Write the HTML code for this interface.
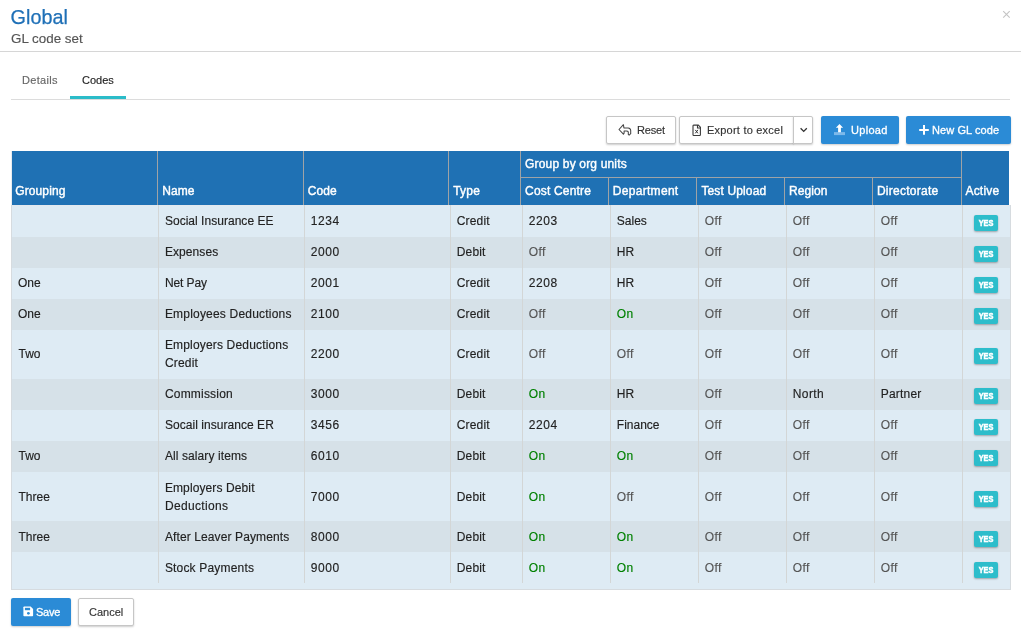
<!DOCTYPE html>
<html lang="en">
<head>
<meta charset="utf-8">
<title>Global - GL code set</title>
<style>
*{box-sizing:border-box;margin:0;padding:0}
html,body{width:1021px;height:635px;background:#fff;overflow:hidden}
body{position:relative;font-family:"Liberation Sans",sans-serif;color:#222;font-size:12px}
#wrap{position:absolute;left:0;top:0;width:1021px;height:635px;will-change:transform}
.abs{position:absolute;white-space:nowrap}
#title{left:10.6px;top:5px;font-size:19.8px;line-height:24px;color:#1f70b7;-webkit-text-stroke-width:.25px}
#sub{left:11px;top:30px;font-size:13.4px;line-height:18px;color:#555;-webkit-text-stroke-width:.15px}
#close{left:1001px;top:5px;font-size:15px;line-height:18px;color:#c4c4c4}
#hr1{left:0;top:51px;width:1021px;height:1px;background:#d6d6d6}
#tabline{left:11px;top:99px;width:999px;height:1px;background:#dcdcdc}
#tabactive{left:70px;top:96px;width:56px;height:3px;background:#2bbcc9}
.tab{top:71px;font-size:11px;line-height:18px;-webkit-text-stroke-width:.15px}
.btn{top:116px;height:28px;border-radius:2px;font-size:11px;line-height:26px;text-align:left}
.btn.w{background:#fff;border:1px solid #c6c6c6;color:#333;box-shadow:0 1px 2px rgba(0,0,0,.2);-webkit-text-stroke:.15px #333}
.btn.b{background:#2b8bd6;color:#fff;line-height:28px;box-shadow:0 1px 2px rgba(0,0,0,.2)}
.btn svg{position:absolute}
.btn span{position:absolute;top:0}
.sb{-webkit-text-stroke:.3px #fff}
/* table */
#thead{left:11px;top:151px;width:998px;height:54px;background:#1f71b4;box-shadow:inset 1px 0 0 #e9ecef}
#thead div{position:absolute;color:#fff;font-size:12px;line-height:14px;white-space:nowrap;-webkit-text-stroke:.4px #fff}
#thead i{position:absolute;background:#9fa3a6;display:block}
#tbody{left:11px;top:205px;width:1000px;height:385px;background:#deebf4;border:1px solid #d6dbdf;border-top:none}
.row{position:absolute;left:0;width:998px}
.row.o{background:#deebf4}
.row.e{background:#d6e1e8}
.row div{position:absolute;font-size:12px;line-height:18px;color:#222;white-space:nowrap;-webkit-text-stroke-width:.15px}
.row div.off{color:#555;letter-spacing:.4px}
.row div.on{color:#008000;letter-spacing:.35px;-webkit-text-stroke-width:.15px}
.row div.cd{letter-spacing:.15px}
.row div.num{letter-spacing:.55px}
.vl{position:absolute;top:0;width:1px;height:378px;background:#d3d6d6}
.yes{position:absolute;width:24px;height:16px;background:#2dbdcb;border-radius:2px;color:#fff;font-size:9.4px;line-height:16px;text-align:center;box-shadow:0 1px 2px rgba(0,0,0,.3)}
.yes b{display:inline-block;font-weight:bold;transform:translateX(-.4px) scaleX(.78);transform-origin:50% 50%;-webkit-text-stroke:.55px #fff}
</style>
</head>
<body>
<div id="wrap">
<div class="abs" id="title">Global</div>
<div class="abs" id="sub">GL code set</div>
<svg class="abs" style="left:1002px;top:10px" width="9" height="9" viewBox="0 0 9 9" role="img" aria-label="Close"><path d="M1.2,1.2 L7.7,7.7 M7.7,1.2 L1.2,7.7" stroke="#c4c4c4" stroke-width="1.1" fill="none"/></svg>
<div class="abs" id="hr1"></div>
<div class="abs tab" style="left:22px;color:#666;letter-spacing:.3px">Details</div>
<div class="abs tab" style="left:82px;color:#222">Codes</div>
<div class="abs" id="tabline"></div>
<div class="abs" id="tabactive"></div>

<div class="abs btn w" style="left:606px;width:70px"><span style="left:30px;letter-spacing:-.15px">Reset</span></div>
<div class="abs btn w" style="left:679px;width:115px;border-radius:2px 0 0 2px"><span style="left:27px;letter-spacing:.22px">Export to excel</span></div>
<div class="abs btn w" style="left:793px;width:20px;border-radius:0 2px 2px 0"></div>
<div class="abs btn b" style="left:821px;width:78px"><span class="sb" style="left:30px;letter-spacing:.3px">Upload</span></div>
<div class="abs btn b" style="left:906px;width:105px"><span class="sb" style="left:26px;letter-spacing:.08px">New GL code</span></div>
<svg class="abs" style="left:618px;top:123.5px" width="14" height="12" viewBox="0 0 14 12"><path d="M1,5.5 L5.4,0.7 L5.9,3.9 L10.2,3.9 Q12.7,4.2 12.7,6.5 L12.7,9.7 L11.1,11.1 L10.3,10.4 L10.3,8 Q10,7 8.3,7 L6.1,7 L6.1,9.1 L5.4,10.2 Z" fill="none" stroke="#444" stroke-width="1.05" stroke-linejoin="round"/></svg>
<svg class="abs" style="left:692px;top:123.5px" width="10" height="13" viewBox="0 0 10 13"><path d="M1.7,1.1 H6.3 L8.4,3.2 V10.8 Q8.4,11.5 7.7,11.5 H1.7 Q1,11.5 1,10.8 V1.8 Q1,1.1 1.7,1.1 Z" fill="none" stroke="#3a3a3a" stroke-width="1.1"/><path d="M5.5,1.1 V4 H8.4" fill="none" stroke="#3a3a3a" stroke-width="1.1"/><path d="M3.3,5.9 L5.9,9.3 M5.9,5.9 L3.3,9.3" fill="none" stroke="#333" stroke-width="1"/></svg>
<svg class="abs" style="left:799px;top:126px" width="10" height="8" viewBox="0 0 10 8"><path d="M1.6,2.2 L4.7,5.4 L7.8,2.2" fill="none" stroke="#333" stroke-width="1.3"/></svg>
<svg class="abs" style="left:833px;top:123px" width="14" height="13" viewBox="0 0 14 13"><rect x="1" y="9.1" width="11" height="3" fill="#7db9ea"/><path d="M6.5,0.9 L10.1,4.7 H7.9 V9.3 H5.1 V4.7 H2.9 Z" fill="#fff"/></svg>
<svg class="abs" style="left:919px;top:125px" width="10" height="10" viewBox="0 0 10 10"><path d="M0.2,4.9 H9.8 M5,0 V9.8" stroke="#fff" stroke-width="2" fill="none"/></svg>

<div class="abs" id="thead">
<div id="h0" style="left:4.2px;top:33px;letter-spacing:0.12px">Grouping</div>
<div id="h1" style="left:151.2px;top:33px;letter-spacing:0.05px">Name</div>
<div id="h2" style="left:296.8px;top:33px;letter-spacing:0.1px">Code</div>
<div id="h3" style="left:442.2px;top:33px;letter-spacing:0.2px">Type</div>
<div id="h4" style="left:514.1px;top:6px;letter-spacing:0.17px">Group by org units</div>
<div id="h5" style="left:514.1px;top:33px;letter-spacing:0.18px">Cost Centre</div>
<div id="h6" style="left:601.8px;top:33px;letter-spacing:0.3px">Department</div>
<div id="h7" style="left:690.4px;top:33px;letter-spacing:0.14px">Test Upload</div>
<div id="h8" style="left:778.0px;top:33px;letter-spacing:0.08px">Region</div>
<div id="h9" style="left:865.9px;top:33px;letter-spacing:0.27px">Directorate</div>
<div id="h10" style="left:954.5px;top:33px;letter-spacing:0.18px">Active</div>
<i style="left:146px;top:0;width:1px;height:54px"></i>
<i style="left:292px;top:0;width:1px;height:54px"></i>
<i style="left:437px;top:0;width:1px;height:54px"></i>
<i style="left:509px;top:0;width:1px;height:54px"></i>
<i style="left:597px;top:27px;width:1px;height:27px"></i>
<i style="left:685px;top:27px;width:1px;height:27px"></i>
<i style="left:773px;top:27px;width:1px;height:27px"></i>
<i style="left:861px;top:27px;width:1px;height:27px"></i>
<i style="left:950px;top:0;width:1px;height:54px"></i>
<i style="left:509px;top:26px;width:442px;height:1px"></i>
</div>

<div class="abs" id="tbody">
<div class="row o" style="top:0px;height:32px">
<div style="left:152.9px;top:7px;letter-spacing:0.03px">Social Insurance EE</div>
<div class="num" style="left:298.8px;top:7px">1234</div>
<div class="cd" style="left:444.8px;top:7px">Credit</div>
<div class="num" style="left:516.8px;top:7px">2203</div>
<div style="left:604.8px;top:7px">Sales</div>
<div class="off" style="left:692.8px;top:7px">Off</div>
<div class="off" style="left:780.8px;top:7px">Off</div>
<div class="off" style="left:868.8px;top:7px">Off</div>
<span class="yes" style="left:962px;top:10px"><b>YES</b></span>
</div>
<div class="row e" style="top:32px;height:31px">
<div style="left:152.9px;top:6px;letter-spacing:0.08px">Expenses</div>
<div class="num" style="left:298.8px;top:6px">2000</div>
<div class="cd" style="left:444.8px;top:6px">Debit</div>
<div class="off" style="left:516.8px;top:6px">Off</div>
<div style="left:604.8px;top:6px">HR</div>
<div class="off" style="left:692.8px;top:6px">Off</div>
<div class="off" style="left:780.8px;top:6px">Off</div>
<div class="off" style="left:868.8px;top:6px">Off</div>
<span class="yes" style="left:962px;top:9px"><b>YES</b></span>
</div>
<div class="row o" style="top:63px;height:31px">
<div style="left:5.9px;top:6px">One</div>
<div style="left:152.9px;top:6px;letter-spacing:-0.1px">Net Pay</div>
<div class="num" style="left:298.8px;top:6px">2001</div>
<div class="cd" style="left:444.8px;top:6px">Credit</div>
<div class="num" style="left:516.8px;top:6px">2208</div>
<div style="left:604.8px;top:6px">HR</div>
<div class="off" style="left:692.8px;top:6px">Off</div>
<div class="off" style="left:780.8px;top:6px">Off</div>
<div class="off" style="left:868.8px;top:6px">Off</div>
<span class="yes" style="left:962px;top:9px"><b>YES</b></span>
</div>
<div class="row e" style="top:94px;height:31px">
<div style="left:5.9px;top:6px">One</div>
<div style="left:152.9px;top:6px;letter-spacing:0.2px">Employees Deductions</div>
<div class="num" style="left:298.8px;top:6px">2100</div>
<div class="cd" style="left:444.8px;top:6px">Credit</div>
<div class="off" style="left:516.8px;top:6px">Off</div>
<div class="on" style="left:604.8px;top:6px">On</div>
<div class="off" style="left:692.8px;top:6px">Off</div>
<div class="off" style="left:780.8px;top:6px">Off</div>
<div class="off" style="left:868.8px;top:6px">Off</div>
<span class="yes" style="left:962px;top:9px"><b>YES</b></span>
</div>
<div class="row o" style="top:125px;height:49px">
<div style="left:6.5px;top:15px">Two</div>
<div style="left:152.9px;top:6px;letter-spacing:0.17px">Employers Deductions<br><span style="letter-spacing:0.2px">Credit</span></div>
<div class="num" style="left:298.8px;top:15px">2200</div>
<div class="cd" style="left:444.8px;top:15px">Credit</div>
<div class="off" style="left:516.8px;top:15px">Off</div>
<div class="off" style="left:604.8px;top:15px">Off</div>
<div class="off" style="left:692.8px;top:15px">Off</div>
<div class="off" style="left:780.8px;top:15px">Off</div>
<div class="off" style="left:868.8px;top:15px">Off</div>
<span class="yes" style="left:962px;top:18px"><b>YES</b></span>
</div>
<div class="row e" style="top:174px;height:31px">
<div style="left:152.9px;top:6px;letter-spacing:0.2px">Commission</div>
<div class="num" style="left:298.8px;top:6px">3000</div>
<div class="cd" style="left:444.8px;top:6px">Debit</div>
<div class="on" style="left:516.8px;top:6px">On</div>
<div style="left:604.8px;top:6px">HR</div>
<div class="off" style="left:692.8px;top:6px">Off</div>
<div style="left:780.8px;top:6px;letter-spacing:0.4px">North</div>
<div style="left:868.8px;top:6px;letter-spacing:0.2px">Partner</div>
<span class="yes" style="left:962px;top:9px"><b>YES</b></span>
</div>
<div class="row o" style="top:205px;height:31px">
<div style="left:152.9px;top:6px;letter-spacing:0.05px">Socail insurance ER</div>
<div class="num" style="left:298.8px;top:6px">3456</div>
<div class="cd" style="left:444.8px;top:6px">Credit</div>
<div class="num" style="left:516.8px;top:6px">2204</div>
<div style="left:604.8px;top:6px">Finance</div>
<div class="off" style="left:692.8px;top:6px">Off</div>
<div class="off" style="left:780.8px;top:6px">Off</div>
<div class="off" style="left:868.8px;top:6px">Off</div>
<span class="yes" style="left:962px;top:9px"><b>YES</b></span>
</div>
<div class="row e" style="top:236px;height:31px">
<div style="left:6.5px;top:6px">Two</div>
<div style="left:152.9px;top:6px;letter-spacing:0.1px">All salary items</div>
<div class="num" style="left:298.8px;top:6px">6010</div>
<div class="cd" style="left:444.8px;top:6px">Debit</div>
<div class="on" style="left:516.8px;top:6px">On</div>
<div class="on" style="left:604.8px;top:6px">On</div>
<div class="off" style="left:692.8px;top:6px">Off</div>
<div class="off" style="left:780.8px;top:6px">Off</div>
<div class="off" style="left:868.8px;top:6px">Off</div>
<span class="yes" style="left:962px;top:9px"><b>YES</b></span>
</div>
<div class="row o" style="top:267px;height:49px">
<div style="left:6.5px;top:16px">Three</div>
<div style="left:152.9px;top:7px;letter-spacing:0.11px">Employers Debit<br><span style="letter-spacing:0.33px">Deductions</span></div>
<div class="num" style="left:298.8px;top:16px">7000</div>
<div class="cd" style="left:444.8px;top:16px">Debit</div>
<div class="on" style="left:516.8px;top:16px">On</div>
<div class="off" style="left:604.8px;top:16px">Off</div>
<div class="off" style="left:692.8px;top:16px">Off</div>
<div class="off" style="left:780.8px;top:16px">Off</div>
<div class="off" style="left:868.8px;top:16px">Off</div>
<span class="yes" style="left:962px;top:19px"><b>YES</b></span>
</div>
<div class="row e" style="top:316px;height:31px">
<div style="left:6.5px;top:7px">Three</div>
<div style="left:152.9px;top:7px;letter-spacing:0.115px">After Leaver Payments</div>
<div class="num" style="left:298.8px;top:7px">8000</div>
<div class="cd" style="left:444.8px;top:7px">Debit</div>
<div class="on" style="left:516.8px;top:7px">On</div>
<div class="on" style="left:604.8px;top:7px">On</div>
<div class="off" style="left:692.8px;top:7px">Off</div>
<div class="off" style="left:780.8px;top:7px">Off</div>
<div class="off" style="left:868.8px;top:7px">Off</div>
<span class="yes" style="left:962px;top:10px"><b>YES</b></span>
</div>
<div class="row o" style="top:347px;height:31px">
<div style="left:152.9px;top:7px;letter-spacing:0.18px">Stock Payments</div>
<div class="num" style="left:298.8px;top:7px">9000</div>
<div class="cd" style="left:444.8px;top:7px">Debit</div>
<div class="on" style="left:516.8px;top:7px">On</div>
<div class="on" style="left:604.8px;top:7px">On</div>
<div class="off" style="left:692.8px;top:7px">Off</div>
<div class="off" style="left:780.8px;top:7px">Off</div>
<div class="off" style="left:868.8px;top:7px">Off</div>
<span class="yes" style="left:962px;top:10px"><b>YES</b></span>
</div>
<i style="position:absolute;left:0;top:0;width:998px;height:1px;background:#e3e8ee"></i>
<i class="vl" style="left:146px"></i>
<i class="vl" style="left:292px"></i>
<i class="vl" style="left:438px"></i>
<i class="vl" style="left:510px"></i>
<i class="vl" style="left:598px"></i>
<i class="vl" style="left:686px"></i>
<i class="vl" style="left:774px"></i>
<i class="vl" style="left:862px"></i>
<i class="vl" style="left:950px"></i>
</div>

<div class="abs btn b" style="left:11px;top:598px;width:60px"><span class="sb" style="left:25px;letter-spacing:-.25px">Save</span></div>
<div class="abs btn w" style="left:78px;top:598px;width:56px"><span style="left:10px">Cancel</span></div>
<svg class="abs" style="left:23px;top:606px" width="11" height="11" viewBox="0 0 11 11"><path d="M1.2,0.4 H7.6 L10.1,2.9 V9.5 Q10.1,10.3 9.3,10.3 H1.2 Q0.4,10.3 0.4,9.5 V1.2 Q0.4,0.4 1.2,0.4 Z" fill="#fff"/><rect x="1.9" y="1.8" width="5.2" height="2.4" fill="#2b8bd6"/><circle cx="5.4" cy="7.3" r="1.4" fill="#2b8bd6"/></svg>
</div>
</body>
</html>
